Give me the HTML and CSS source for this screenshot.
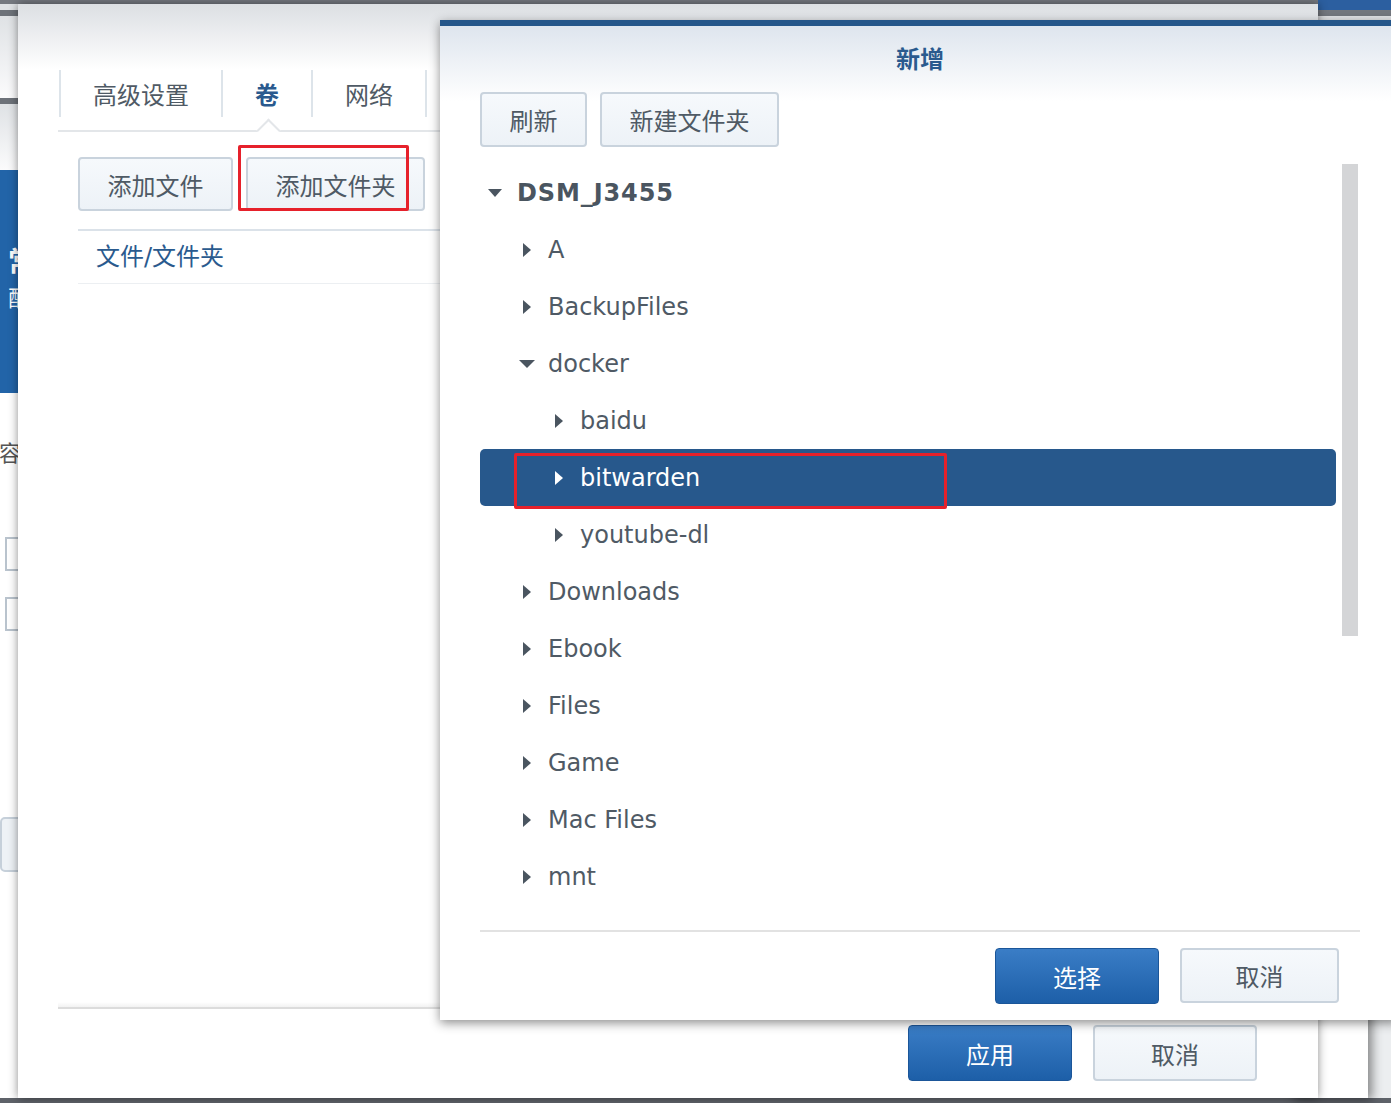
FILE: index.html
```html
<!DOCTYPE html>
<html lang="zh-CN">
<head>
<meta charset="utf-8">
<title>新增</title>
<link rel="stylesheet" href="styles.css">
</head>
<body>
<div class="desk">
  <div class="bg-left">
    <div class="bl-a"></div>
    <div class="bl-bar"></div>
    <div class="bl-grad"></div>
    <div class="bl-bar"></div>
    <div class="bl-grad2"></div>
    <div class="bl-blue"><span class="bl-t1">常</span><span class="bl-t2">配</span></div>
    <div class="bl-white">
      <span class="bl-t3">容</span>
      <span class="bl-chk bl-chk1"></span>
      <span class="bl-chk bl-chk2"></span>
      <span class="bl-btn"></span>
    </div>
  </div>
  <div class="bg-right-top"></div>
  <div class="bg-right-bottom"></div>

  <div class="main">
    <div class="main-head"></div>
    <div class="tabs">
      <div class="tab">高级设置</div>
      <div class="tab active">卷</div>
      <div class="tab">网络</div>
      <div class="tab">环境</div>
    </div>
    <div class="main-toolbar">
      <button class="btn">添加文件</button>
      <button class="btn btn-wide">添加文件夹</button>
    </div>
    <div class="list-head">文件/文件夹</div>
    <div class="main-spacer"></div>
    <div class="main-footer">
      <button class="btn btn-primary">应用</button>
      <button class="btn btn-cancel">取消</button>
    </div>
    <div class="mark mark-main"></div>
  </div>

  <div class="dialog">
    <div class="dlg-title">新增</div>
    <div class="dlg-toolbar">
      <button class="btn btn-refresh">刷新</button>
      <button class="btn btn-newdir">新建文件夹</button>
    </div>
    <div class="dlg-body">
      <div class="tree">
        <div class="row lv0 root"><span class="arrow down"></span><span>DSM_J3455</span></div>
        <div class="row lv1"><span class="arrow right"></span><span>A</span></div>
        <div class="row lv1"><span class="arrow right"></span><span>BackupFiles</span></div>
        <div class="row lv1"><span class="arrow down"></span><span>docker</span></div>
        <div class="row lv2"><span class="arrow right"></span><span>baidu</span></div>
        <div class="row lv2 selected"><span class="arrow right"></span><span>bitwarden</span></div>
        <div class="row lv2"><span class="arrow right"></span><span>youtube-dl</span></div>
        <div class="row lv1"><span class="arrow right"></span><span>Downloads</span></div>
        <div class="row lv1"><span class="arrow right"></span><span>Ebook</span></div>
        <div class="row lv1"><span class="arrow right"></span><span>Files</span></div>
        <div class="row lv1"><span class="arrow right"></span><span>Game</span></div>
        <div class="row lv1"><span class="arrow right"></span><span>Mac Files</span></div>
        <div class="row lv1"><span class="arrow right"></span><span>mnt</span></div>
      </div>
      <div class="scroll"><div class="thumb"></div></div>
    </div>
    <div class="dlg-footer">
      <button class="btn btn-primary btn-select">选择</button>
      <button class="btn btn-cancel2">取消</button>
    </div>
    <div class="mark mark-dlg"></div>
  </div>
</div>
</body>
</html>
```

FILE: styles.css
```css
* { box-sizing: border-box; }
html, body { margin: 0; padding: 0; }
body {
  font-family: "DejaVu Sans", "Noto Sans CJK SC", sans-serif;
  color: #4f5a65;
  overflow: hidden;
}
.desk {
  position: relative;
  width: 1391px;
  height: 1103px;
  overflow: hidden;
  background: linear-gradient(#757980 0, #757980 4px, #eceef0 4px, #eceef0 1098px, #5e6269 1098px);
}

/* background windows */
.bg-left {
  position: absolute;
  left: 0; top: 4px;
  width: 18px; height: 1094px;
  overflow: hidden;
  display: flex;
  flex-direction: column;
}
.bl-a { height: 6px; background: #dfe2e5; }
.bl-bar { height: 6px; background: #6d7279; }
.bl-grad { height: 82px; background: linear-gradient(#dfe2e5, #fbfbfc); }
.bl-grad2 { height: 66px; background: linear-gradient(#dfe2e5, #fbfbfc); }
.bl-blue {
  height: 223px;
  background: #2264a8;
  color: #fff;
  display: flex;
  flex-direction: column;
  padding-top: 75px;
  padding-left: 8px;
  line-height: 36px;
}
.bl-t1 { font-size: 28px; font-weight: bold; }
.bl-t2 { font-size: 22px; }
.bl-white { flex: 1; background: #fff; position: relative; }
.bl-t3 { position: absolute; left: -1px; top: 42px; font-size: 22px; color: #555; }
.bl-chk { position: absolute; left: 5px; width: 20px; height: 34px; border: 2px solid #b9c3cd; }
.bl-chk1 { top: 144px; }
.bl-chk2 { top: 204px; }
.bl-btn { position: absolute; left: 0; top: 424px; width: 30px; height: 55px; border: 2px solid #c6d0da; border-radius: 5px; background: #eef2f6; }

.bg-right-top {
  position: absolute;
  left: 1318px; top: 0;
  width: 80px; height: 20px;
  background: linear-gradient(#2c5fa0 0, #2c5fa0 10px, #73777e 10px, #73777e 16px, #e1e3e6 16px);
}
.bg-right-bottom {
  position: absolute;
  left: 1290px; top: 990px;
  width: 78px; height: 108px;
  background: #fff;
  box-shadow: 4px 2px 10px rgba(0,0,0,0.45);
}

/* main window */
.main {
  position: absolute;
  left: 18px; top: 4px;
  width: 1300px; height: 1094px;
  background: #fff;
  box-shadow: 0 0 9px rgba(0,0,0,0.45);
  display: flex;
  flex-direction: column;
  padding: 0 40px;
}
.main-head {
  height: 66px;
  margin: 0 -40px;
  background: linear-gradient(#dcdfe3, #ffffff);
}
.tabs {
  display: flex;
  height: 62px;
  padding: 0 0 13px 1px;
  border-bottom: 2px solid #e3e6e9;
}
.tab {
  position: relative;
  height: 47px;
  padding: 4px 32px 0;
  border-left: 2px solid #dde4ea;
  font-size: 24px;
  line-height: 45px;
  color: #4f5a65;
}
.tab.active { color: #2a5a8e; font-weight: bold; }
.tab.active::after {
  content: "";
  position: absolute;
  left: 50%;
  bottom: -22px;
  width: 15px; height: 15px;
  margin-left: -7px;
  background: #fff;
  border-left: 2px solid #e3e6e9;
  border-top: 2px solid #e3e6e9;
  transform: rotate(45deg);
}
.main-toolbar {
  display: flex;
  gap: 13px;
  padding: 25px 0 0 20px;
}
.btn {
  font-family: "DejaVu Sans", "Noto Sans CJK SC", sans-serif;
  font-size: 24px;
  color: #4f5a65;
  height: 54px;
  border: 2px solid #c9d3dd;
  border-radius: 4px;
  background: linear-gradient(#f6f9fc, #edf2f7);
  padding: 0;
  margin: 0;
}
.main-toolbar .btn { width: 155px; }
.main-toolbar .btn-wide { width: 179px; }
.list-head {
  margin: 18px 0 0 20px;
  height: 55px;
  border-top: 2px solid #dbe2e9;
  border-bottom: 1px solid #eceff2;
  padding-left: 18px;
  font-size: 24px;
  line-height: 52px;
  color: #2a5a8e;
}
.main-spacer { flex: 1; }
.main-footer {
  position: relative;
  border-top: 2px solid #dcdcdc;
  display: flex;
  justify-content: flex-end;
  gap: 21px;
  padding: 16px 21px 17px 0;
}
.main-footer::before {
  content: "";
  position: absolute;
  left: 0; right: 0;
  top: -7px; height: 5px;
  background: linear-gradient(rgba(0,0,0,0), rgba(0,0,0,0.05));
}
.btn-primary {
  width: 164px;
  height: 56px;
  color: #fff;
  border: 1px solid #1b5699;
  background: linear-gradient(#3a7dc6, #1d5fa8);
}
.btn-cancel { width: 164px; height: 56px; }

/* dialog */
.dialog {
  position: absolute;
  left: 440px; top: 20px;
  width: 958px; height: 1000px;
  background: linear-gradient(#dee5ee 0, #ffffff 75px, #ffffff 100%);
  border-top: 6px solid #25568a;
  box-shadow: 0 3px 10px rgba(0,0,0,0.45);
  padding: 0 38px 0 40px;
  display: flex;
  flex-direction: column;
}
.dlg-title {
  height: 66px;
  padding-top: 3px;
  text-align: center;
  font-size: 24px;
  font-weight: bold;
  line-height: 63px;
  color: #2a5a8e;
}
.dlg-toolbar { display: flex; gap: 13px; }
.dlg-toolbar .btn { height: 55px; }
.btn-refresh { width: 107px; }
.btn-newdir { width: 179px; }
.dlg-body {
  display: flex;
  margin-top: 17px;
  height: 766px;
}
.tree { width: 856px; }
.row {
  height: 57px;
  display: flex;
  align-items: center;
  font-size: 24px;
  color: #4f5a65;
  border-radius: 5px;
  padding-left: 7px;
}
.row.lv1 { padding-left: 39px; }
.row.lv2 { padding-left: 71px; }
.row.root { font-weight: bold; letter-spacing: 0.9px; color: #4a5560; }
.row.selected { background: #27588c; color: #fff; }
.arrow {
  width: 16px;
  margin-right: 13px;
  display: flex;
  justify-content: center;
  align-items: center;
  height: 16px;
}
.arrow::before { content: ""; display: block; width: 0; height: 0; }
.arrow.right::before {
  border-left: 8px solid #4a5560;
  border-top: 7px solid transparent;
  border-bottom: 7px solid transparent;
}
.arrow.down::before {
  border-top: 8px solid #4a5560;
  border-left: 8px solid transparent;
  border-right: 8px solid transparent;
}
.root .arrow { margin-right: 14px; }
.root .arrow.down::before { border-left-width: 7px; border-right-width: 7px; }
.selected .arrow.right::before { border-left-color: #fff; }
.scroll { margin-left: 6px; width: 16px; }
.thumb { height: 472px; background: #d4d5d7; }
.dlg-footer {
  border-top: 2px solid #e2e2e2;
  display: flex;
  justify-content: flex-end;
  gap: 21px;
  padding: 16px 21px 0 0;
}
.btn-select { width: 164px; height: 56px; }
.btn-cancel2 { width: 159px; height: 55px; }

/* annotation boxes */
.mark {
  position: absolute;
  border: 3px solid #e6212b;
  border-radius: 2px;
  pointer-events: none;
}
.mark-main { left: 220px; top: 141px; width: 171px; height: 66px; }
.mark-dlg { left: 74px; top: 427px; width: 433px; height: 56px; }
```
